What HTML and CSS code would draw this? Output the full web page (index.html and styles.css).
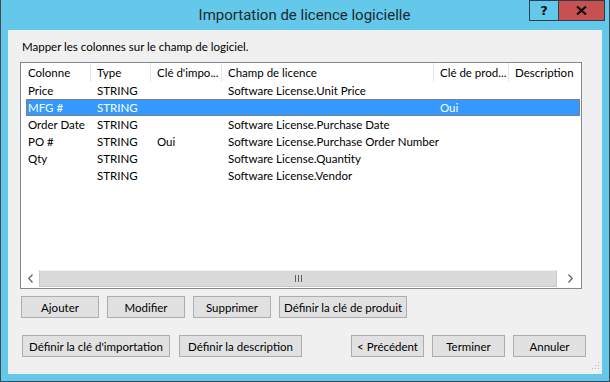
FILE: index.html
```html
<!DOCTYPE html>
<html lang="fr">
<head>
    <meta charset="UTF-8">
    <title>Importation de licence logicielle</title>
    <link rel="stylesheet" href="styles.css">
</head>
<body>
    <div class="window">
        <div class="titlebar">
            <div class="title">Importation de licence logicielle</div>
            <div class="caption-buttons">
                <div class="cap-btn help">?</div>
                <div class="cap-btn close">
                    <svg width="11" height="9" viewBox="0 0 11 9">
                        <path d="M1 0.5 L10 8.5 M10 0.5 L1 8.5" stroke="#111" stroke-width="2.2"/>
                    </svg>
                </div>
            </div>
        </div>
        <div class="client">
            <div class="hint">Mapper les colonnes sur le champ de logiciel.</div>

            <div class="listview">
                <div class="lv-body">
                    <div class="lv-header">
                        <div class="col c1">Colonne</div>
                        <div class="col c2">Type</div>
                        <div class="col c3">Clé d'impo...</div>
                        <div class="col c4">Champ de licence</div>
                        <div class="col c5">Clé de prod...</div>
                        <div class="col c6">Description</div>
                    </div>
                    <div class="lv-row">
                        <div class="cell c1">Price</div>
                        <div class="cell c2">STRING</div>
                        <div class="cell c3"></div>
                        <div class="cell c4">Software License.Unit Price</div>
                        <div class="cell c5"></div>
                        <div class="cell c6"></div>
                    </div>
                    <div class="lv-row selected">
                        <div class="cell c1">MFG #</div>
                        <div class="cell c2">STRING</div>
                        <div class="cell c3"></div>
                        <div class="cell c4"></div>
                        <div class="cell c5">Oui</div>
                        <div class="cell c6"></div>
                    </div>
                    <div class="lv-row">
                        <div class="cell c1">Order Date</div>
                        <div class="cell c2">STRING</div>
                        <div class="cell c3"></div>
                        <div class="cell c4">Software License.Purchase Date</div>
                        <div class="cell c5"></div>
                        <div class="cell c6"></div>
                    </div>
                    <div class="lv-row">
                        <div class="cell c1">PO #</div>
                        <div class="cell c2">STRING</div>
                        <div class="cell c3">Oui</div>
                        <div class="cell c4">Software License.Purchase Order Number</div>
                        <div class="cell c5"></div>
                        <div class="cell c6"></div>
                    </div>
                    <div class="lv-row">
                        <div class="cell c1">Qty</div>
                        <div class="cell c2">STRING</div>
                        <div class="cell c3"></div>
                        <div class="cell c4">Software License.Quantity</div>
                        <div class="cell c5"></div>
                        <div class="cell c6"></div>
                    </div>
                    <div class="lv-row">
                        <div class="cell c1"></div>
                        <div class="cell c2">STRING</div>
                        <div class="cell c3"></div>
                        <div class="cell c4">Software License.Vendor</div>
                        <div class="cell c5"></div>
                        <div class="cell c6"></div>
                    </div>
                </div>
                <div class="hscroll">
                    <div class="sb-arrow">
                        <svg width="5" height="9" viewBox="0 0 5 9"><path d="M4.5 0.5 L0.8 4.5 L4.5 8.5" fill="none" stroke="#606060" stroke-width="1.2"/></svg>
                    </div>
                    <div class="sb-thumb">
                        <svg width="7" height="7" viewBox="0 0 7 7"><path d="M0.5 0 V7 M3.5 0 V7 M6.5 0 V7" stroke="#606060" stroke-width="1"/></svg>
                    </div>
                    <div class="sb-arrow right">
                        <svg width="5" height="9" viewBox="0 0 5 9"><path d="M0.5 0.5 L4.2 4.5 L0.5 8.5" fill="none" stroke="#606060" stroke-width="1.2"/></svg>
                    </div>
                </div>
            </div>

            <div class="button-row">
                <button class="btn">Ajouter</button>
                <button class="btn">Modifier</button>
                <button class="btn">Supprimer</button>
                <button class="btn wide">Définir la clé de produit</button>
            </div>

            <div class="footer-row">
                <div class="group">
                    <button class="btn import-key">Définir la clé d'importation</button>
                    <button class="btn describe">Définir la description</button>
                </div>
                <div class="group nav">
                    <button class="btn nav-btn">&lt; Précédent</button>
                    <button class="btn nav-btn">Terminer</button>
                    <button class="btn nav-btn">Annuler</button>
                </div>
            </div>

            <svg class="grip" width="10" height="10" viewBox="0 0 10 10">
                <rect x="8" y="0" width="1" height="1" fill="#b8b8b8"/>
                <rect x="5" y="3" width="1" height="1" fill="#b8b8b8"/>
                <rect x="8" y="3" width="1" height="1" fill="#b8b8b8"/>
                <rect x="2" y="6" width="1" height="1" fill="#b8b8b8"/>
                <rect x="5" y="6" width="1" height="1" fill="#b8b8b8"/>
                <rect x="8" y="6" width="1" height="1" fill="#b8b8b8"/>
            </svg>
        </div>
    </div>
</body>
</html>
```
FILE: styles.css
```css
html, body {
    margin: 0;
    padding: 0;
}
body {
    width: 610px;
    height: 382px;
    font-family: Lato, "Liberation Sans", sans-serif;
    font-size: 11.5px;
    color: #000;
}
.window {
    width: 610px;
    height: 382px;
    box-sizing: border-box;
    background-color: #63c8e9;
    border: 1px solid #3d4a52;
    border-top: none;
    display: flex;
    flex-direction: column;
}
.titlebar {
    height: 30px;
    display: flex;
    padding-left: 79px;
}
.title {
    flex: 1;
    text-align: center;
    font-family: Roboto, sans-serif;
    font-size: 15px;
    color: #1f2a30;
    line-height: 30px;
}
.caption-buttons {
    display: flex;
    align-items: flex-start;
    margin-right: 4px;
}
.cap-btn {
    height: 21px;
    box-sizing: border-box;
    border: 1px solid #2f3d46;
    display: flex;
    align-items: center;
    justify-content: center;
    font-family: "DejaVu Sans", sans-serif;
    font-weight: bold;
    font-size: 13px;
    color: #111;
}
.cap-btn.help {
    width: 29px;
    border-right: none;
}
.cap-btn.close {
    width: 47px;
    background-color: #c75050;
}
.client {
    flex: 1;
    margin: 0 7px 7px 7px;
    background-color: #f0f0f0;
    position: relative;
    display: flex;
    flex-direction: column;
}
.hint {
    margin: 9px 0 0 14px;
    height: 15px;
    line-height: 15px;
}
.listview {
    margin: 8px 0 0 12px;
    width: 562px;
    height: 227px;
    box-sizing: border-box;
    border: 1px solid #828790;
    background-color: #fff;
    padding: 0 1px 1px 1px;
    display: flex;
    flex-direction: column;
    overflow: hidden;
}
.lv-body {
    flex: 1;
    overflow: hidden;
    white-space: nowrap;
}
.lv-header {
    display: flex;
    height: 19px;
    line-height: 19px;
}
.lv-header .col {
    box-sizing: border-box;
    padding-left: 6px;
    border-right: 1px solid #e5e5e5;
    flex-shrink: 0;
    overflow: hidden;
}
.lv-row {
    display: flex;
    height: 17px;
    line-height: 17px;
    margin-left: 4px;
}
.lv-row .cell {
    box-sizing: border-box;
    padding-left: 6px;
    flex-shrink: 0;
}
.lv-row .cell.c1 {
    padding-left: 2px;
}
.lv-row.selected {
    background-color: #3399ff;
    color: #fff;
    outline: 1px dotted #cc6600;
    outline-offset: -1px;
}
.c1 { width: 69px; }
.lv-row .c1 { width: 65px; }
.c2 { width: 60px; }
.c3 { width: 71px; }
.c4 { width: 212px; }
.c5 { width: 75px; }
.c6 { width: 90px; }
.hscroll {
    height: 17px;
    display: flex;
    background-color: #e8e8e8;
}
.sb-arrow {
    width: 17px;
    background-color: #fff;
    display: flex;
    align-items: center;
    justify-content: center;
}
.sb-arrow.right {
    width: 23px;
    padding-left: 4px;
    box-sizing: border-box;
}
.sb-thumb {
    flex: 1;
    background-color: #dadada;
    border: 1px solid #c8c8c8;
    border-top-color: #f0f0f0;
    display: flex;
    align-items: center;
    justify-content: center;
}
.button-row {
    display: flex;
    gap: 8px;
    margin: 7px 0 0 13px;
}
.btn {
    height: 22px;
    box-sizing: border-box;
    border: 1px solid #adadad;
    background-color: #e1e1e1;
    font-family: Lato, "Liberation Sans", sans-serif;
    font-size: 11.5px;
    color: #000;
    padding: 0;
    width: 78px;
}
.btn.wide {
    width: 128px;
}
.footer-row {
    display: flex;
    justify-content: space-between;
    margin: 17px 16px 0 14px;
}
.group {
    display: flex;
    gap: 9px;
}
.group.nav {
    gap: 8px;
}
.btn.import-key {
    width: 148px;
}
.btn.describe {
    width: 123px;
}
.btn.nav-btn {
    width: 73px;
}
.grip {
    position: absolute;
    right: 2px;
    bottom: 2px;
}
```
